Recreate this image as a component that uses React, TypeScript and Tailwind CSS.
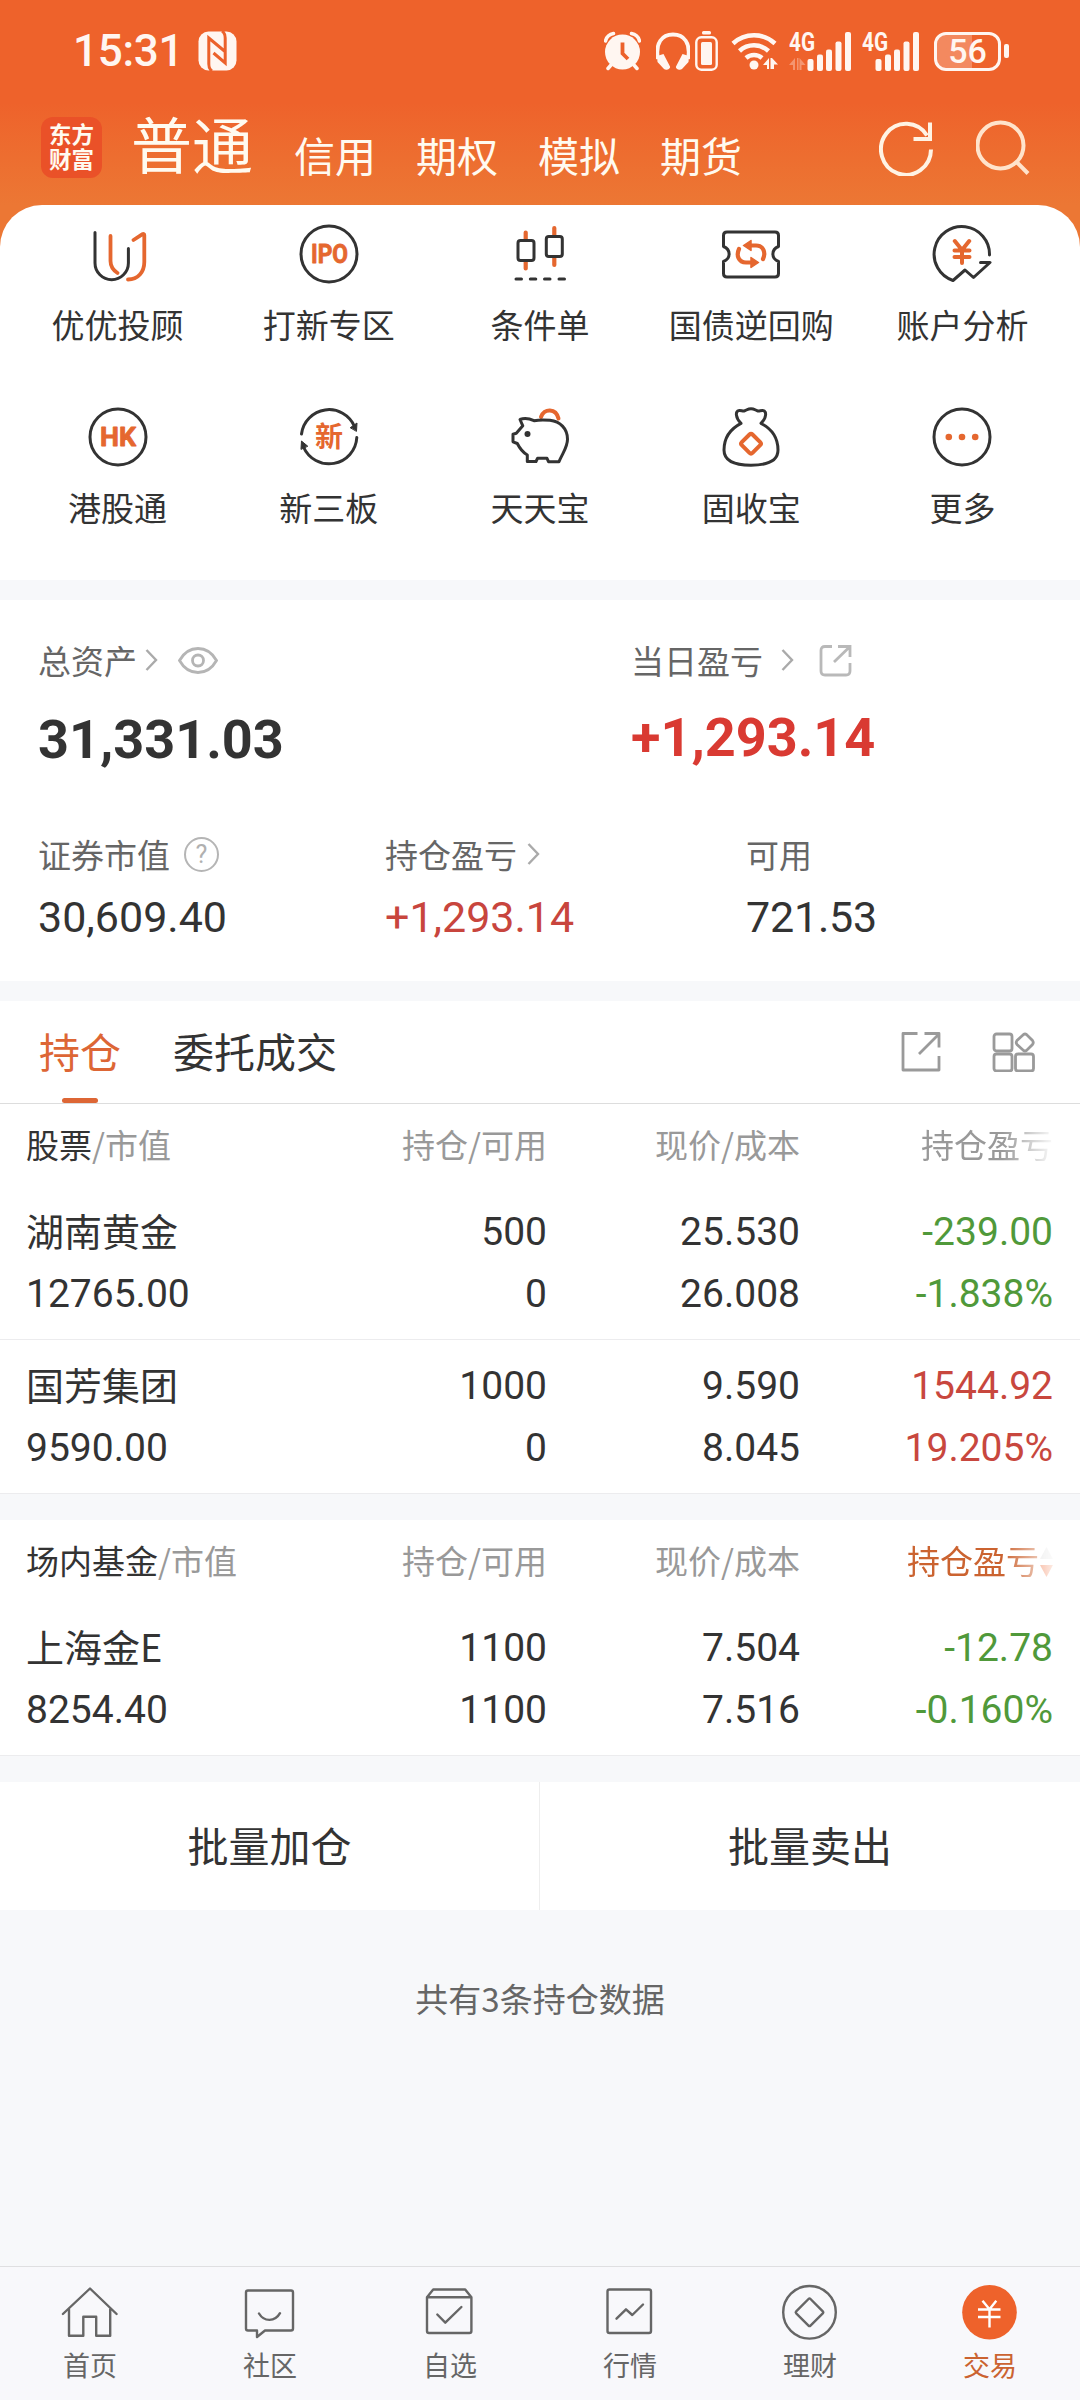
import type { ReactNode } from 'react'

const INK = '#333333'
const ORANGE = '#e5672f'

type Holding = {
  name: string
  value: string
  qty: string
  available: string
  price: string
  cost: string
  profit: string
  ratio: string
}

const stocks: Holding[] = [
  { name: '湖南黄金', value: '12765.00', qty: '500', available: '0', price: '25.530', cost: '26.008', profit: '-239.00', ratio: '-1.838%' },
  { name: '国芳集团', value: '9590.00', qty: '1000', available: '0', price: '9.590', cost: '8.045', profit: '1544.92', ratio: '19.205%' },
]

const funds: Holding[] = [
  { name: '上海金E', value: '8254.40', qty: '1100', available: '1100', price: '7.504', cost: '7.516', profit: '-12.78', ratio: '-0.160%' },
]

function Icon({ children, stroke = INK, width = 3 }: { children: ReactNode; stroke?: string; width?: number }) {
  return (
    <svg
      className="size-[60px] shrink-0"
      viewBox="0 0 60 60"
      fill="none"
      stroke={stroke}
      strokeWidth={width}
      strokeLinecap="round"
      strokeLinejoin="round"
    >
      {children}
    </svg>
  )
}

const shortcuts: { label: string; icon: ReactNode }[] = [
  {
    label: '优优投顾',
    icon: (
      <Icon>
        <path d="M7 8.500V39a16.700 16.700 0 0 0 33.400 0V24.500" />
        <path stroke={ORANGE} strokeWidth="3.800" d="M22.500 12V37c0 5 2.500 9 7 12M45.500 16l9-5.800c1-.6 1.800 0 1.800 1V38c0 10-6.300 17.500-16.300 17.500" />
      </Icon>
    ),
  },
  {
    label: '打新专区',
    icon: (
      <Icon>
        <circle cx="30" cy="30" r="28" />
        <g fill={ORANGE} stroke={ORANGE} strokeWidth="0.800" fontSize="25" fontWeight="700" fontFamily="Roboto">
          <text x="30.500" y="39" textAnchor="middle" textLength="37" lengthAdjust="spacingAndGlyphs">IPO</text>
        </g>
      </Icon>
    ),
  },
  {
    label: '条件单',
    icon: (
      <Icon>
        <path stroke={ORANGE} strokeWidth="4.200" d="M15.700 8.500V16M15.700 37v7.500M44.300 4v8M44.300 33v8" />
        <rect x="8" y="16.500" width="16" height="20" rx="2.500" />
        <rect x="36.300" y="12.500" width="16" height="20" rx="2.500" />
        <path d="M6 55h5.500M20.300 55h5.500M34.500 55H40M49 55h5.500" />
      </Icon>
    ),
  },
  {
    label: '国债逆回购',
    icon: (
      <Icon>
        <path d="M6 8h48q3.500 0 3.500 3.500V22.500c-7.500 3-7.500 12 0 15V49.500q0 3.500-3.500 3.500H6q-3.500 0-3.500-3.500V37.500c7.500-3 7.500-12 0-15V11.500Q2.500 8 6 8Z" />
        <g stroke={ORANGE} strokeWidth="4.200">
          <path d="M30 21.500h5c7.500 0 10 7 7 13.500" />
          <path d="M30 38.500h-5c-7.500 0-10-7-7-13.500" />
          <path fill={ORANGE} strokeWidth="1.500" d="M22.500 21.500l7.500-5v10ZM37.500 38.500l-7.500-5v10Z" />
        </g>
      </Icon>
    ),
  },
  {
    label: '账户分析',
    icon: (
      <Icon>
        <path d="M57.500 31A27.700 27.700 0 1 0 21 56.500L33 46l8.500 7.500L58 38.500H48.500" />
        <path stroke={ORANGE} strokeWidth="4" d="M22.800 17l7.200 9 7.200-9M22.500 26.500h15M22.500 33h15M30 26.500V39" />
      </Icon>
    ),
  },
  {
    label: '港股通',
    icon: (
      <Icon>
        <circle cx="30" cy="30" r="28" />
        <g fill={ORANGE} stroke={ORANGE} strokeWidth="0.800" fontSize="25" fontWeight="700" fontFamily="Roboto">
          <text x="30" y="39" textAnchor="middle" textLength="36" lengthAdjust="spacingAndGlyphs">HK</text>
        </g>
      </Icon>
    ),
  },
  {
    label: '新三板',
    icon: (
      <Icon>
        <path d="M2.500 27A27.700 27.700 0 0 1 55.500 19.500M57.800 30.500A27.800 27.800 0 0 1 4.500 40" />
        <path fill={INK} strokeWidth="1" d="M51.500 20.500l6.500-4.500-.5 8ZM2 42l.5-8 6 5Z" />
        <text x="30" y="39.500" textAnchor="middle" fontSize="28" fontWeight="700" fontFamily="Noto Sans CJK SC" fill={ORANGE} stroke="none">新</text>
      </Icon>
    ),
  },
  {
    label: '天天宝',
    icon: (
      <Icon>
        <path stroke={ORANGE} strokeWidth="4" d="M31 10c3-9 15-9 17.500 1.500" />
        <path d="M10 12.500c4-1.700 9-1.200 14 1.200 5-.9 10-.9 16-.4 10 1.200 17.500 8 17.500 19 0 8-4.500 13-8.500 22.400H38.500l-1.500-3.400h-9.500l-1.500 3.200h-8.700V48c-5-3-7.500-6.500-10-11.500l-4.300-1.700v-7.500l3.300-1 6.500-7.500Z" />
        <circle cx="17.500" cy="27" r="3" fill={INK} stroke="none" />
      </Icon>
    ),
  },
  {
    label: '固收宝',
    icon: (
      <Icon>
        <path d="M20 16.300C14.500 11 14 4 18 3.500c2-.3 3.500.8 5 .5C25.500 3.200 27 1.700 30 1.700S34.500 3.200 37 4c1.500.3 3-.8 5-.5 4 .5 3.500 7.500-2 12.800C50 21.500 57 30 57 43c0 10-9 15.200-27 15.200S3 53 3 43C3 30 10 21.500 20 16.300Z" />
        <path stroke={ORANGE} strokeWidth="4" d="M28.500 27.500q1.500-1.500 3 0l7.700 7.700q1.500 1.500 0 3l-7.700 7.700q-1.500 1.500-3 0l-7.700-7.700q-1.500-1.500 0-3Z" />
      </Icon>
    ),
  },
  {
    label: '更多',
    icon: (
      <Icon>
        <circle cx="30" cy="30" r="28" />
        <g fill={ORANGE} stroke="none">
          <circle cx="16.800" cy="30" r="3.300" />
          <circle cx="30" cy="30" r="3.300" />
          <circle cx="43.200" cy="30" r="3.300" />
        </g>
      </Icon>
    ),
  },
]

const navItems: { label: string; active?: boolean; icon: ReactNode }[] = [
  {
    label: '首页',
    icon: <path d="M2.900 32L30 6.500 56.600 32M9 27.500v26.200h14.300V34.700h12.900v19h14V27.500" />,
  },
  {
    label: '社区',
    icon: <path d="M8 8.500h43q2 0 2 2v36q0 2-2 2H25L17 55v-6.500H8q-2 0-2-2v-36q0-2 2-2ZM19 31.500c5 8.500 16 8.500 21-.3" />,
  },
  {
    label: '自选',
    icon: <path d="M7 15.300L13.200 7.500h32l6.200 7.800V49q0 2-2 2H9q-2 0-2-2ZM7 15.300h44.400M17.300 32.500l8 8.200L41.400 25" />,
  },
  {
    label: '行情',
    icon: <path d="M9.500 7.500H49q2 0 2 2V49q0 2-2 2H9.500q-2 0-2-2V9.500q0-2 2-2ZM16.500 36.700l9.500-9.400 6.300 5.700L43 22.500" />,
  },
  {
    label: '理财',
    icon: (
      <>
        <circle cx="29.500" cy="30.300" r="26.300" />
        <path d="M28.500 17q1-1 2 0l12.300 12.300q1 1 0 2L30.500 43.600q-1 1-2 0L16.200 31.300q-1-1 0-2Z" />
      </>
    ),
  },
  {
    label: '交易',
    active: true,
    icon: (
      <>
        <circle cx="29.500" cy="30.300" r="27.300" fill="#ee622b" stroke="none" />
        <path stroke="#fff" strokeLinecap="butt" d="M22.500 18.700l7 8.600 6.800-8.600M18 27.500h22.500M18 35h22.500M29.500 27.500v18" />
      </>
    ),
  },
]

function Signal({ transfer }: { transfer?: boolean }) {
  return (
    <svg className={transfer ? 'h-[56px] w-[62px]' : 'h-[56px] w-[57px]'} viewBox={transfer ? '0 -8 62 56' : '5 -8 57 56'} fill="#fff6f1">
      <text x={transfer ? 0 : 5} y="20" fontSize="26" fontWeight="700" fontFamily="Roboto" textLength="26" lengthAdjust="spacingAndGlyphs">4G</text>
      {transfer && <path opacity="0.35" d="M0 34l6-7v12H4v-5ZM8 27h1.500v12H8ZM10.500 27l6 7-4 0v5h-2Z" />}
      <rect x="18.500" y="28" width="6" height="12" rx="2" />
      <rect x="28" y="23.500" width="6" height="16.500" rx="2" />
      <rect x="37" y="18.500" width="6" height="21.500" rx="2" />
      <rect x="46.500" y="10.500" width="6" height="29.500" rx="2" />
      <rect x="56" y="1" width="6" height="39" rx="2" />
    </svg>
  )
}

function StatusBar() {
  return (
    <div className="flex h-[102px] items-center pr-[71px] pl-[73px] text-[#fff6f1]">
      <span className="w-[125px] font-['Roboto',sans-serif] text-[44px] font-medium leading-none tracking-[-0.300px]">15:31</span>
      <svg className="h-10 w-10" viewBox="0 0 40 40">
        <rect x="0.500" y="0.500" width="38" height="39" rx="10" fill="#fff6f1" />
        <path d="M14 40Q10.800 38 10.800 33V7L27 20.500M24 0Q27.200 2 27.200 7V32L15.500 22" stroke="#ec612b" strokeWidth="3" fill="none" />
      </svg>
      <svg className="ml-auto h-10 w-[37px]" viewBox="0 0 37 40">
        <circle cx="18.500" cy="21" r="17.500" fill="#fff6f1" />
        <path d="M1.500 10a10 10 0 0 1 8-7.500M35.500 10a10 10 0 0 0-8-7.500M7 34l-3 3.500M30 34l3 3.500" stroke="#fff6f1" strokeWidth="3.500" strokeLinecap="round" fill="none" />
        <path d="M18.500 11.500v11l5.500 5.500" stroke="#ec612b" strokeWidth="3.800" fill="none" />
      </svg>
      <svg className="ml-[15px] h-10 w-[34px]" viewBox="0 0 34 40">
        <path d="M2 28C-1 12 6 3.500 17 3.500S35 12 32 28" stroke="#fff6f1" strokeWidth="3.800" fill="none" />
        <path d="M1 25l6.500-2L14 35.500c.8 2.500-4 4.500-6 2.500L1.500 31ZM33 25l-6.500-2L20 35.500c-.8 2.500 4 4.500 6 2.500l6.500-7Z" fill="#fff6f1" />
      </svg>
      <svg className="ml-[5px] h-10 w-[23px]" viewBox="0 0 23 40">
        <rect x="7" y="0" width="9" height="3.500" rx="1.500" fill="#fff6f1" />
        <rect x="1.300" y="6.300" width="20.400" height="32.400" rx="5" stroke="#fff6f1" strokeWidth="2.400" fill="none" />
        <rect x="6" y="11" width="11" height="23" rx="1.500" fill="#fff6f1" />
      </svg>
      <svg className="ml-[13px] h-10 w-12" viewBox="0 0 48 40">
        <path d="M2 12.500a31 31 0 0 1 42 0M8.500 20a21.500 21.500 0 0 1 29 0M15 27a12 12 0 0 1 16 0" stroke="#fff6f1" strokeWidth="4.500" fill="none" />
        <circle cx="23" cy="34" r="4.500" fill="#fff6f1" />
        <path fill="#fff6f1" d="M32 34l6-7v11h-2v-4ZM39.500 27H41l6 6.500h-4V38h-3.500Z" />
      </svg>
      <div className="ml-[10px]">
        <Signal transfer />
      </div>
      <div className="ml-[11px]">
        <Signal />
      </div>
      <div className="ml-[15px] flex h-[39px] w-[67px] items-center justify-center rounded-[12px] border-[3.500px] border-[#fff6f1] bg-linear-to-r from-[#f3895f] from-58% to-transparent to-58%">
        <span className="font-['Roboto',sans-serif] text-[34px] font-medium leading-none">56</span>
      </div>
      <div className="ml-[3px] h-[14px] w-[5px] rounded-[2px] bg-[#fff6f1]" />
    </div>
  )
}

function AppBar() {
  return (
    <div className="flex h-[91px] items-center pl-[41px] text-[#fffaf0]">
      <div className="flex size-[61px] flex-col items-center justify-center rounded-[12px] bg-[#ea5128] pb-[3px] text-[22.500px] leading-[25.500px] font-bold">
        <span>东方</span>
        <span>财富</span>
      </div>
      <span className="mb-[10px] ml-[29px] text-[61px] leading-none">普通</span>
      <div className="mt-[14px] ml-[41px] flex gap-[40px] text-[41px] leading-none">
        <span>信用</span>
        <span>期权</span>
        <span>模拟</span>
        <span>期货</span>
      </div>
      <svg className="ml-auto h-[56px] w-[54px]" viewBox="0 0 54 56" fill="none" stroke="#fff3e4" strokeWidth="4">
        <path d="M52 29.500A25 25.500 0 1 1 48 15.500" />
        <path d="M51 2.500V19H34.500" />
      </svg>
      <svg className="mr-[50px] ml-[43px] h-[55px] w-[54px]" viewBox="0 0 54 55" fill="none" stroke="#ffe3cb" strokeWidth="4">
        <circle cx="24.500" cy="25.500" r="23" />
        <path d="M40.500 42L52 53.500" />
      </svg>
    </div>
  )
}

function Chevron({ className }: { className?: string }) {
  return (
    <svg className={`h-[22px] w-[13px] shrink-0 ${className ?? ''}`} viewBox="0 0 13 22" fill="none" stroke="#aaaaaa" strokeWidth="2.400">
      <path d="M1.500 1l9.500 10-9.500 10" />
    </svg>
  )
}

function AssetSummary() {
  return (
    <section className="h-[381px] bg-white pt-[40px] text-[#333333]">
      <div className="flex pl-[38px]">
        <div className="w-[593px]">
          <div className="flex h-10 items-center text-[33px] leading-none text-[#666666]">
            <span>总资产</span>
            <Chevron className="ml-[8px]" />
            <svg className="ml-[20px] h-[27px] w-[40px]" viewBox="0 0 40 27" fill="none" stroke="#b5b5b5" strokeWidth="2.800">
              <path d="M1.500 13.500C6 5.500 12 1.500 20 1.500s14 4 18.500 12C34 21.500 28 25.500 20 25.500S6 21.500 1.500 13.500Z" />
              <circle cx="20" cy="13.500" r="5.500" />
            </svg>
          </div>
          <div className="mt-[30px] font-['Roboto',sans-serif] text-[54px] leading-[60px] font-bold">31,331.03</div>
        </div>
        <div>
          <div className="flex h-10 items-center text-[33px] leading-none text-[#666666]">
            <span>当日盈亏</span>
            <Chevron className="ml-[18px]" />
            <svg className="ml-[25px] size-[33px]" viewBox="0 0 33 33" fill="none" stroke="#b9b9b9" strokeWidth="2.800">
              <path d="M13 2.500H6q-4 0-4 4V27q0 4 4 4h21q4 0 4-4V19M19 2.500h12V13M15 18L30.500 3" />
            </svg>
          </div>
          <div className="mt-[28px] font-['Roboto',sans-serif] text-[54px] leading-[60px] font-bold text-[#d93a32]">+1,293.14</div>
        </div>
      </div>
      <div className="mt-[64px] flex pl-[38px]">
        <div className="w-[347px]">
          <div className="flex h-10 items-center text-[33px] leading-none text-[#666666]">
            <span>证券市值</span>
            <span className="ml-[14px] flex size-[35px] items-center justify-center rounded-full border-[2.500px] border-[#b5b5b5] font-['Roboto',sans-serif] text-[25px] text-[#b0b0b0]">?</span>
          </div>
          <div className="mt-[18px] font-['Roboto',sans-serif] text-[43px] leading-[50px]">30,609.40</div>
        </div>
        <div className="w-[361px]">
          <div className="flex h-10 items-center text-[33px] leading-none text-[#666666]">
            <span>持仓盈亏</span>
            <Chevron className="ml-[10px]" />
          </div>
          <div className="mt-[18px] font-['Roboto',sans-serif] text-[43px] leading-[50px] text-[#c8453d]">+1,293.14</div>
        </div>
        <div>
          <div className="flex h-10 items-center text-[33px] leading-none text-[#666666]">可用</div>
          <div className="mt-[18px] font-['Roboto',sans-serif] text-[43px] leading-[50px] tracking-[-0.200px]">721.53</div>
        </div>
      </div>
    </section>
  )
}

function HoldingTabs() {
  return (
    <div className="flex h-[103px] items-center border-b border-[#dddddd] bg-white pr-[45px] pl-[39px] text-[41px] leading-none">
      <div className="relative flex h-[102px] items-center pb-[4px] text-[#dd6635]">
        持仓
        <span className="absolute bottom-0 left-[23px] h-[5px] w-[36px] rounded-full bg-[#dd6635]" />
      </div>
      <div className="ml-[52px] pb-[4px] text-[#333333]">委托成交</div>
      <svg className="ml-auto size-[40px]" viewBox="0 0 40 40" fill="none" stroke="#9a9a9a" strokeWidth="2.800" strokeLinejoin="round">
        <path d="M16.500 1.500H2v36.500h36V24M23.500 1.500H38v14M18 22L38 2" />
      </svg>
      <svg className="ml-[51px] h-[40px] w-[43px]" viewBox="0 0 43 40" fill="none" stroke="#9a9a9a" strokeWidth="2.800">
        <rect x="2" y="2" width="18" height="17" rx="2.500" />
        <rect x="2" y="22" width="18" height="17" rx="2.500" />
        <rect x="23.500" y="22" width="18" height="17" rx="2.500" />
        <path d="M31.500 2.500q1.500-1 3 0l6 6q1.500 2 0 4l-6 6q-1.500 1-3 0l-6.500-6q-1.500-2 0-4Z" />
      </svg>
    </div>
  )
}

function TableHead({ title, sorted }: { title: string; sorted?: boolean }) {
  return (
    <div className="grid h-[82px] grid-cols-[268px_253px_253px_253px] items-center pb-[1px] pl-[26px] text-[33px] leading-none text-[#999999]">
      <div className="whitespace-nowrap">
        <span className="text-[#333333]">{title}</span>/市值
      </div>
      <div className="text-right">持仓/可用</div>
      <div className="text-right">现价/成本</div>
      {sorted ? (
        <div className="flex items-center justify-end gap-[1px] text-[#cb6330] [mask-image:linear-gradient(to_right,#000_80%,transparent_103%)]">
          持仓盈亏
          <svg className="mt-[3px] h-[30px] w-[13px]" viewBox="0 0 13 30">
            <path d="M6.500 0L13 12H0Z" fill="#dddddd" />
            <path d="M6.500 30L13 18H0Z" fill="#ee622b" />
          </svg>
        </div>
      ) : (
        <div className="text-right [mask-image:linear-gradient(to_right,#000_80%,transparent_101%)]">持仓盈亏</div>
      )}
    </div>
  )
}

function HoldingRow({ row }: { row: Holding }) {
  const tone = row.profit.startsWith('-') ? 'text-[#50993a]' : 'text-[#c8473e]'
  return (
    <div className="grid h-[154px] grid-cols-[268px_253px_253px_253px] grid-rows-[61.500px_61.500px] border-b border-[#ececee] pt-[16px] pl-[26px] font-['Roboto',sans-serif] text-[39px] leading-[61.500px] text-[#333333]">
      <div className="-mt-[3px] font-['Noto_Sans_CJK_SC',sans-serif] text-[38px]">{row.name}</div>
      <div className="text-right">{row.qty}</div>
      <div className="text-right">{row.price}</div>
      <div className={`text-right ${tone}`}>{row.profit}</div>
      <div>{row.value}</div>
      <div className="text-right">{row.available}</div>
      <div className="text-right">{row.cost}</div>
      <div className={`text-right ${tone}`}>{row.ratio}</div>
    </div>
  )
}

function BottomNav() {
  return (
    <nav className="mt-auto grid h-[134px] grid-cols-6 border-t border-[#dfdfe1] bg-[#f8f8fb] pt-[15px]">
      {navItems.map((item) => (
        <div key={item.label} className="flex flex-col items-center">
          <Icon stroke="#666666" width={2.4}>
            {item.icon}
          </Icon>
          <span className={item.active ? 'mt-[7px] text-[27px] leading-[32px] text-[#cb6330]' : 'mt-[7px] text-[27px] leading-[32px] text-[#666666]'}>
            {item.label}
          </span>
        </div>
      ))}
    </nav>
  )
}

export default function App() {
  return (
    <div className="flex h-[2400px] w-[1080px] flex-col overflow-hidden bg-[#f7f8fa] font-['Noto_Sans_CJK_SC',sans-serif]">
      <header className="h-[205px] shrink-0 bg-linear-to-b from-[#ee622b] from-50% to-[#ec7734]">
        <StatusBar />
        <AppBar />
      </header>

      <div className="bg-[#ec7734]">
        <section className="grid h-[375px] grid-cols-5 content-start gap-y-[63px] rounded-t-[42px] bg-white px-[12px] pt-[19px]">
          {shortcuts.map((item) => (
            <div key={item.label} className="flex flex-col items-center">
              {item.icon}
              <span className="mt-[20px] text-[33px] leading-[40px] text-[#333333]">{item.label}</span>
            </div>
          ))}
        </section>
      </div>

      <div className="mt-[20px]">
        <AssetSummary />
      </div>

      <div className="mt-[20px]">
        <HoldingTabs />
        <section className="bg-white">
          <TableHead title="股票" />
          {stocks.map((row) => (
            <HoldingRow key={row.name} row={row} />
          ))}
        </section>
      </div>

      <section className="mt-[26px] bg-white">
        <TableHead title="场内基金" sorted />
        {funds.map((row) => (
          <HoldingRow key={row.name} row={row} />
        ))}
      </section>

      <div className="mt-[26px] grid h-[128px] grid-cols-2 bg-white text-[41px] text-[#333333]">
        <button className="border-r border-[#eeeeee] pb-[3px]">批量加仓</button>
        <button className="pb-[3px]">批量卖出</button>
      </div>

      <p className="mt-[68px] text-center text-[33px] leading-[40px] text-[#666666]">共有3条持仓数据</p>

      <BottomNav />
    </div>
  )
}
